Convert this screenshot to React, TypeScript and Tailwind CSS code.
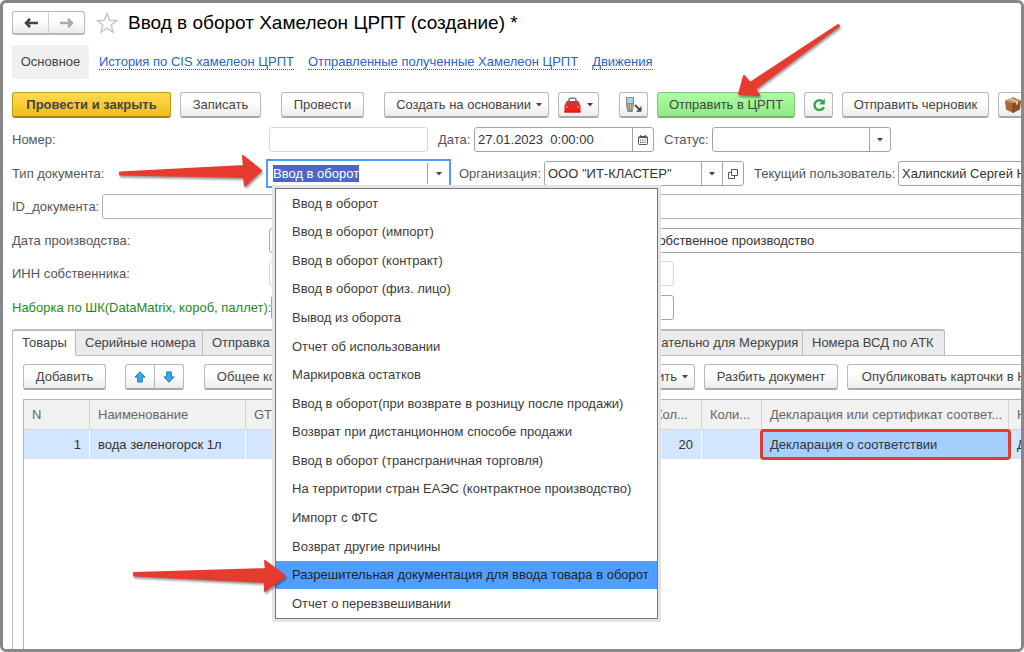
import React, { useEffect, useRef, useState } from 'react';
import clsx from 'clsx';

const DOC_TYPES = [
  'Ввод в оборот',
  'Ввод в оборот (импорт)',
  'Ввод в оборот (контракт)',
  'Ввод в оборот (физ. лицо)',
  'Вывод из оборота',
  'Отчет об использовании',
  'Маркировка остатков',
  'Ввод в оборот(при возврате в розницу после продажи)',
  'Возврат при дистанционном способе продажи',
  'Ввод в оборот (трансграничная торговля)',
  'На территории стран ЕАЭС (контрактное производство)',
  'Импорт с ФТС',
  'Возврат другие причины',
  'Разрешительная документация для ввода товара в оборот',
  'Отчет о перевзвешивании',
];

const ACTIVE_TYPE = 13;

const Caret = () => (
  <svg width="6" height="4" viewBox="0 0 6 4" className="shrink-0" aria-hidden="true">
    <path d="M0 0h6L3 3.6z" fill="#444" />
  </svg>
);

const Btn: React.FC<React.ButtonHTMLAttributes<HTMLButtonElement>> = ({ className, children, ...rest }) => (
  <button
    type="button"
    className={clsx(
      'flex h-[26px] shrink-0 items-center rounded-[3px] border border-b-2 whitespace-nowrap',
      className
    )}
    {...rest}
  >
    {children}
  </button>
);

const PLAIN = 'border-[#b8b8b8] border-b-[#a9a9a9] bg-linear-to-b from-white from-40% to-[#ececec] text-[#444]';

const FIELD = 'flex h-[25px] shrink-0 overflow-hidden rounded-[3px] border bg-white';
const FIELD_INPUT = 'min-w-0 flex-1 px-[3px] text-[#333] outline-none';
const FIELD_BTN = 'flex w-[21px] shrink-0 items-center justify-center border-l border-[#a3a3a3]';

const ToolboxIcon = () => (
  <svg width="17" height="16" viewBox="0 0 17 16" aria-hidden="true">
    <path d="M5 4.500V3Q5 1.200 6.800 1.200h3.400Q12 1.200 12 3v1.500" fill="none" stroke="#77797c" strokeWidth="1.600" />
    <path d="M2.500 4h12L16.500 9H.5z" fill="#c9383a" />
    <path d="M.5 8.500h16v7H.5z" fill="#f5241f" />
    <path d="M.5 13.500h16v2H.5z" fill="#df1915" />
    <path d="M3 9.500v1M14 9.500v1" stroke="#fff" strokeWidth="1.400" />
  </svg>
);

const TerminalIcon = () => (
  <svg width="18" height="17" viewBox="0 0 18 17" aria-hidden="true">
    <path d="M1 1h8v8l-1.500 7H2.500L1 9z" fill="#878b8e" />
    <path d="M2.200 2h5.600v5H2.200z" fill="#9fd8f7" />
    <path d="M2.800 8.500h1.200v1.200H2.800zM4.800 8.500H6v1.200H4.800zM6.600 8.500h1.200v1.200H6.600z" fill="#ffd451" />
    <path d="M3 10.700h1v1H3zM4.800 10.700H6v1H4.800zM6.600 10.700h1v1h-1zM4.800 12.700H6v1H4.800z" fill="#e4e4e4" />
    <path d="M10 9l4.500 4.500" stroke="#4c4c4c" strokeWidth="1.800" />
    <path d="M16.500 10v5.700H11z" fill="#4c4c4c" />
  </svg>
);

const RefreshIcon = () => (
  <svg width="14" height="14" viewBox="0 0 14 14" aria-hidden="true">
    <path d="M10.300 3.200A4.900 4.900 0 1 0 11.900 9" fill="none" stroke="#2fa745" strokeWidth="2.400" />
    <path d="M12.800.6v6H7z" fill="#2fa745" />
  </svg>
);

const BoxIcon = () => (
  <svg width="18" height="18" viewBox="0 0 18 18" className="shrink-0" aria-hidden="true">
    <path d="M1 4.500L9 7v10l-7-3.500z" fill="#a9663a" />
    <path d="M9 7l8-2.500-1 9L9 17z" fill="#8a4f29" />
    <path d="M1 4.500L9.500 1 17 4.500 9 7z" fill="#c98a58" />
    <path d="M4 3.300l8 2.700v3l2-.7V5.300L6.300 2.400z" fill="#e9c79d" />
    <path d="M9 7v10" stroke="#6d3b1c" strokeWidth=".8" />
  </svg>
);

const CalendarIcon = () => (
  <svg width="10" height="10" viewBox="0 0 10 10" aria-hidden="true">
    <rect x=".5" y="1.500" width="9" height="8" rx="1" fill="none" stroke="#555" />
    <path d="M.5 2.500h9M2.800 0v2M7.200 0v2" stroke="#555" strokeWidth="1.200" />
    <path d="M2 5h6M2 7.300h6" stroke="#555" strokeWidth="1.200" strokeDasharray="1.200 1.100" />
  </svg>
);

const OpenIcon = () => (
  <svg width="10" height="10" viewBox="0 0 10 10" fill="none" stroke="#555" aria-hidden="true">
    <path d="M3.500.5h6v6h-6zM3.500 3.500h-3v6h6v-3" />
  </svg>
);

const BlueArrow = ({ down }: { down?: boolean }) => (
  <svg width="12" height="12" viewBox="0 0 12 12" className={clsx(down && 'rotate-180')} aria-hidden="true">
    <path d="M6 .7l5 5.400H8.300v5H3.700v-5H1z" fill="#3ba7ea" stroke="#1d78b5" strokeLinejoin="round" />
  </svg>
);

const Pointer = ({ d, className }: { d: string; className: string }) => (
  <svg
    className={clsx('pointer-events-none absolute z-30 overflow-visible drop-shadow-[1px_2px_1px_rgba(0,0,0,0.4)]', className)}
    aria-hidden="true"
  >
    <path d={d} fill="#e63c2f" stroke="#e63c2f" strokeWidth="2" strokeLinejoin="round" />
  </svg>
);

const DocTypeField = () => {
  const [value, setValue] = useState(DOC_TYPES[0]);
  const [open, setOpen] = useState(true);
  const inputRef = useRef<HTMLInputElement>(null);

  useEffect(() => {
    inputRef.current?.focus();
    inputRef.current?.select();
  }, []);

  return (
    <div className="relative -my-1 -ml-[3px] w-[185px] shrink-0">
      <div className="flex h-[29px] border-2 border-[#4a9cff] bg-white py-0.5">
        <div className="flex flex-1 items-center pl-[5px]">
          <input
            id="doc-type"
            ref={inputRef}
            role="combobox"
            aria-expanded={open}
            aria-controls="doc-type-list"
            value={value}
            onChange={(e) => setValue(e.target.value)}
            className="w-full leading-[17px] text-[#333] outline-none selection:bg-[#4d68c4] selection:text-white"
          />
        </div>
        <button
          type="button"
          aria-label="Выбрать тип"
          onClick={() => setOpen(!open)}
          className="flex w-[22px] shrink-0 items-center justify-center border-l border-[#a3a3a3]"
        >
          <Caret />
        </button>
      </div>
      {open && (
        <ul
          id="doc-type-list"
          role="listbox"
          className="absolute top-[29px] left-[9px] z-20 flex h-[431px] w-[383px] flex-col border border-[#777] bg-white shadow-[0_0_0_3px_#e4e4e4]"
        >
          {DOC_TYPES.map((type, i) => (
            <li
              key={type}
              role="option"
              aria-selected={i === ACTIVE_TYPE}
              onClick={() => {
                setValue(type);
                setOpen(false);
              }}
              className={clsx(
                'flex flex-1 items-center pl-4 whitespace-nowrap',
                i === ACTIVE_TYPE ? 'bg-[#509fff] text-[#222]' : 'text-[#3c3c3c]'
              )}
            >
              {type}
            </li>
          ))}
        </ul>
      )}
    </div>
  );
};

const Header = () => (
  <>
    <div className="flex h-6 items-center">
      <div className="flex h-6 w-[73px] shrink-0 rounded-[3px] border border-b-2 border-[#b8b8b8] bg-linear-to-b from-white from-40% to-[#ececec]">
        <button type="button" aria-label="Назад" className="flex flex-1 items-center justify-center border-r border-[#d0d0d0]">
          <svg width="14" height="10" viewBox="0 0 14 10" fill="none" stroke="#444" strokeWidth="2.600">
            <path d="M14 5H2M6 .8L2 5l4 4.200" />
          </svg>
        </button>
        <button type="button" aria-label="Вперед" className="flex flex-1 items-center justify-center">
          <svg width="14" height="10" viewBox="0 0 14 10" fill="none" stroke="#aaa" strokeWidth="2.600">
            <path d="M0 5h12M8 .8L12 5l-4 4.200" />
          </svg>
        </button>
      </div>
      <button type="button" aria-label="В избранное" className="ml-[11px] shrink-0">
        <svg width="22" height="22" viewBox="0 0 22 22" fill="none" stroke="#c3c7cb" strokeWidth="1.500">
          <path d="M11 1.500l2.600 6.700 7.200.4-5.600 4.500 1.900 7L11 16.200l-6.100 3.900 1.900-7L1.200 8.600l7.200-.4z" />
        </svg>
      </button>
      <h1 className="ml-2.5 text-[19px] leading-6 whitespace-nowrap text-black">Ввод в оборот Хамелеон ЦРПТ (создание) *</h1>
    </div>

    <nav className="mt-2.5 flex h-[34px] items-center gap-3.5 whitespace-nowrap text-[#2f62be]">
      <span className="-mr-1 flex h-full w-[77px] shrink-0 items-center justify-center rounded-[3px] bg-[#f0f0f0] text-[#444]">Основное</span>
      <a href="#history" className="border-b border-dotted border-[#2f62be] leading-[14px]">История по CIS хамелеон ЦРПТ</a>
      <a href="#sent" className="border-b border-dotted border-[#2f62be] leading-[14px]">Отправленные полученные Хамелеон ЦРПТ</a>
      <a href="#moves" className="border-b border-dotted border-[#2f62be] leading-[14px]">Движения</a>
    </nav>

    <div className="mt-[13px] flex gap-5">
      <div className="flex gap-[9px]">
        <Btn className="w-[159px] justify-center border-[#bd9a1a] border-b-[#a88612] bg-linear-to-b from-[#ffda4d] to-[#eebd14] font-bold text-[#444]">
          Провести и закрыть
        </Btn>
        <Btn className={clsx(PLAIN, 'w-[81px] justify-center')}>Записать</Btn>
      </div>
      <Btn className={clsx(PLAIN, 'w-[83px] justify-center')}>Провести</Btn>
      <div className="flex gap-[9px]">
        <Btn className={clsx(PLAIN, 'w-[165px] justify-end gap-[5px] pr-1.5')}>
          Создать на основании <Caret />
        </Btn>
        <Btn className={clsx(PLAIN, 'w-[41px] justify-center gap-1.5')} aria-label="Инструменты">
          <ToolboxIcon />
          <Caret />
        </Btn>
      </div>
      <div className="flex gap-[9px]">
        <Btn className={clsx(PLAIN, 'w-[29px] justify-center')} aria-label="Терминал сбора данных">
          <TerminalIcon />
        </Btn>
        <Btn className="w-[138px] justify-center border-[#86c67d] border-b-[#78b070] bg-linear-to-b from-[#aefca4] to-[#90ea85] text-[#444]">
          Отправить в ЦРПТ
        </Btn>
        <Btn className={clsx(PLAIN, 'w-[29px] justify-center')} aria-label="Обновить">
          <RefreshIcon />
        </Btn>
        <Btn className={clsx(PLAIN, 'w-[147px] justify-center')}>Отправить черновик</Btn>
        <Btn className={clsx(PLAIN, 'w-[29px] justify-center')} aria-label="Упаковка">
          <BoxIcon />
        </Btn>
      </div>
    </div>
  </>
);

const DocForm = () => (
  <form className="mt-[9px] flex flex-col gap-2 whitespace-nowrap text-[#555]">
    <div className="flex flex-col gap-[9px]">
      <div className="flex h-[25px] items-center">
        <label htmlFor="number" className="w-[257px] shrink-0">Номер:</label>
        <div className={clsx(FIELD, 'w-[159px] border-[#d8d8d8]')}>
          <input id="number" className={FIELD_INPUT} readOnly />
        </div>
        <label htmlFor="date" className="ml-2.5 w-9 shrink-0">Дата:</label>
        <div className={clsx(FIELD, 'w-[180px] border-[#a3a3a3]')}>
          <input id="date" className={FIELD_INPUT} defaultValue="27.01.2023  0:00:00" />
          <button type="button" aria-label="Календарь" className={FIELD_BTN}>
            <CalendarIcon />
          </button>
        </div>
        <label htmlFor="status" className="ml-2.5 w-12 shrink-0">Статус:</label>
        <div className={clsx(FIELD, 'relative w-[179px] border-[#a3a3a3]')}>
          <select id="status" className="w-full appearance-none px-[3px] outline-none">
            <option></option>
          </select>
          <span className="pointer-events-none absolute inset-y-0 right-0 flex w-[21px] items-center justify-center border-l border-[#a3a3a3]">
            <Caret />
          </span>
        </div>
      </div>
      <div className="flex h-[25px] items-center">
        <label htmlFor="doc-type" className="w-[257px] shrink-0">Тип документа:</label>
        <DocTypeField />
        <label htmlFor="org" className="ml-2 w-[85px] shrink-0">Организация:</label>
        <div className={clsx(FIELD, 'w-[200px] border-[#a3a3a3]')}>
          <input id="org" className={FIELD_INPUT} defaultValue={'ООО "ИТ-КЛАСТЕР"'} />
          <button type="button" aria-label="Выбрать организацию" className={FIELD_BTN}>
            <Caret />
          </button>
          <button type="button" aria-label="Открыть" className={FIELD_BTN}>
            <OpenIcon />
          </button>
        </div>
        <label htmlFor="user" className="ml-2.5 w-36 shrink-0">Текущий пользователь:</label>
        <div className={clsx(FIELD, 'w-[200px] border-[#a3a3a3]')}>
          <input id="user" className={FIELD_INPUT} defaultValue="Халипский Сергей Николаевич" />
        </div>
      </div>
    </div>

    <div className="flex flex-col gap-[9px]">
      <div className="flex h-[25px] items-center">
        <label htmlFor="doc-id" className="w-[90px] shrink-0">ID_документа:</label>
        <div className={clsx(FIELD, '-mr-8 flex-1 border-[#b4b4b4]')}>
          <input id="doc-id" className={FIELD_INPUT} />
        </div>
      </div>
      <div className="flex h-[25px] items-center">
        <label htmlFor="made" className="w-[257px] shrink-0">Дата производства:</label>
        <div className={clsx(FIELD, 'w-[159px] border-[#a3a3a3]')}>
          <input id="made" className={FIELD_INPUT} />
        </div>
        <div className={clsx(FIELD, '-mr-8 ml-[217px] flex-1 border-[#a3a3a3]')}>
          <input aria-label="Вид производства" className={FIELD_INPUT} defaultValue="Собственное производство" />
        </div>
      </div>
    </div>

    <div className="flex flex-col gap-[9px]">
      <div className="flex h-[25px] items-center">
        <label htmlFor="inn" className="w-[257px] shrink-0">ИНН собственника:</label>
        <div className={clsx(FIELD, 'w-[405px] border-[#d8d8d8]')}>
          <input id="inn" className={FIELD_INPUT} readOnly />
        </div>
      </div>
      <div className="flex h-[25px] w-[662px] items-center">
        <label htmlFor="barcode" className="min-w-[257px] shrink-0 text-[#1a8c1a]">Наборка по ШК(DataMatrix, короб, паллет):</label>
        <div className={clsx(FIELD, 'flex-1 border-[#a3a3a3]')}>
          <input id="barcode" className={FIELD_INPUT} />
        </div>
      </div>
    </div>
  </form>
);

const TABS = [
  { title: 'Товары', width: 'w-16' },
  { title: 'Серийные номера', width: 'w-[127px]' },
  { title: 'Отправка', width: 'w-[419px]' },
  { title: 'Обязательно для Меркурия', width: 'w-[181px]' },
  { title: 'Номера ВСД по АТК', width: 'w-[142px]' },
];

const TH = 'border-r border-b border-[#d3d3d3] px-2 text-left font-normal';
const TD = 'border-r border-white px-2';

const GoodsPanel = () => {
  const [tab, setTab] = useState(0);

  return (
    <section className="mt-[9px] flex flex-1 flex-col">
      <div role="tablist" className="flex h-[27px]">
        {TABS.map(({ title, width }, i) => (
          <button
            key={title}
            type="button"
            role="tab"
            aria-selected={i === tab}
            onClick={() => setTab(i)}
            className={clsx(
              'shrink-0 border-t-2 border-r border-b border-[#bcbcbc] px-[9px] text-left whitespace-nowrap text-[#444]',
              width,
              i === 0 && 'rounded-tl-[3px] border-l',
              i === TABS.length - 1 && 'rounded-tr-[3px]',
              i === tab ? 'border-b-white bg-white' : 'bg-[#ebebeb]'
            )}
          >
            {title}
          </button>
        ))}
        <div className="flex-1 border-b border-[#bcbcbc]" />
      </div>

      <div className="flex flex-1 flex-col border-l border-[#bcbcbc] pt-2 pl-2.5">
        <div className="flex">
          <Btn className={clsx(PLAIN, 'w-[83px] justify-center')}>Добавить</Btn>
          <Btn className={clsx(PLAIN, 'ml-[19px] w-[30px] justify-center rounded-r-none')} aria-label="Вверх">
            <BlueArrow />
          </Btn>
          <Btn className={clsx(PLAIN, '-ml-px w-[30px] justify-center rounded-l-none')} aria-label="Вниз">
            <BlueArrow down />
          </Btn>
          <Btn className={clsx(PLAIN, 'ml-5 w-[140px] justify-center')}>Общее количество</Btn>
          <Btn className={clsx(PLAIN, 'ml-[253px] w-[98px] justify-end gap-[5px] pr-1.5')}>
            Заполнить <Caret />
          </Btn>
          <Btn className={clsx(PLAIN, 'ml-[9px] w-[134px] justify-center')}>Разбить документ</Btn>
          <Btn className={clsx(PLAIN, 'ml-[9px] w-[202px] justify-center')}>Опубликовать карточки в НК</Btn>
        </div>

        <div className="mt-[9px] flex-1 border-t border-l border-[#b5b5b5]">
          <table className="w-[1100px] table-fixed border-separate border-spacing-0 whitespace-nowrap">
            <colgroup>
              <col className="w-[66px]" />
              <col className="w-[156px]" />
              <col className="w-[401px]" />
              <col className="w-[55px]" />
              <col className="w-[60px]" />
              <col className="w-[247px]" />
              <col />
            </colgroup>
            <thead>
              <tr className="h-[30px] bg-[#f1f1f1] text-[#666]">
                <th className={TH}>N</th>
                <th className={TH}>Наименование</th>
                <th className={TH}>GTIN</th>
                <th className={TH}>Кол...</th>
                <th className={TH}>Коли...</th>
                <th className={TH}>Декларация или сертификат соответ...</th>
                <th className={TH}>Номер</th>
              </tr>
            </thead>
            <tbody>
              <tr className="h-[29px] bg-[#d3e6ff] text-[#333]">
                <td className={clsx(TD, 'text-right')}>1</td>
                <td className={TD}>вода зеленогорск 1л</td>
                <td className={TD} />
                <td className={clsx(TD, 'text-right')}>20</td>
                <td className={TD} />
                <td className="relative bg-[#a6cffe] px-2">
                  Декларация о соответствии
                  <span className="pointer-events-none absolute -inset-x-[2px] -inset-y-[1px] rounded border-[3px] border-[#e03b30]" />
                </td>
                <td className={TD}>Декларация</td>
              </tr>
            </tbody>
          </table>
        </div>
      </div>
    </section>
  );
};

export default function App() {
  return (
    <div className="bg-white font-['Liberation_Sans',Arial,sans-serif] text-[13px]">
      <main className="relative flex min-h-screen flex-col overflow-hidden rounded-md border-[3px] border-[#878787] pt-2 pl-[9px]">
        <Header />
        <DocForm />
        <GoodsPanel />

        {/* callout arrows */}
        <Pointer className="top-[150px] left-[115px] h-9 w-[150px]" d="M2 19.500l124-6.500-1-10 18 14.500-16 15-1-8.500L2 21.500z" />
        <Pointer className="top-[555px] left-[129px] h-9 w-[150px]" d="M2 15l132-4-1-8 20 15-20 15v-9L2 17.500z" />
        <Pointer className="top-[20px] left-[734px] h-20 w-[110px]" d="M101 2L13 60l-6-7-5 18 20 1-4-6L102 3z" />
      </main>
    </div>
  );
}
